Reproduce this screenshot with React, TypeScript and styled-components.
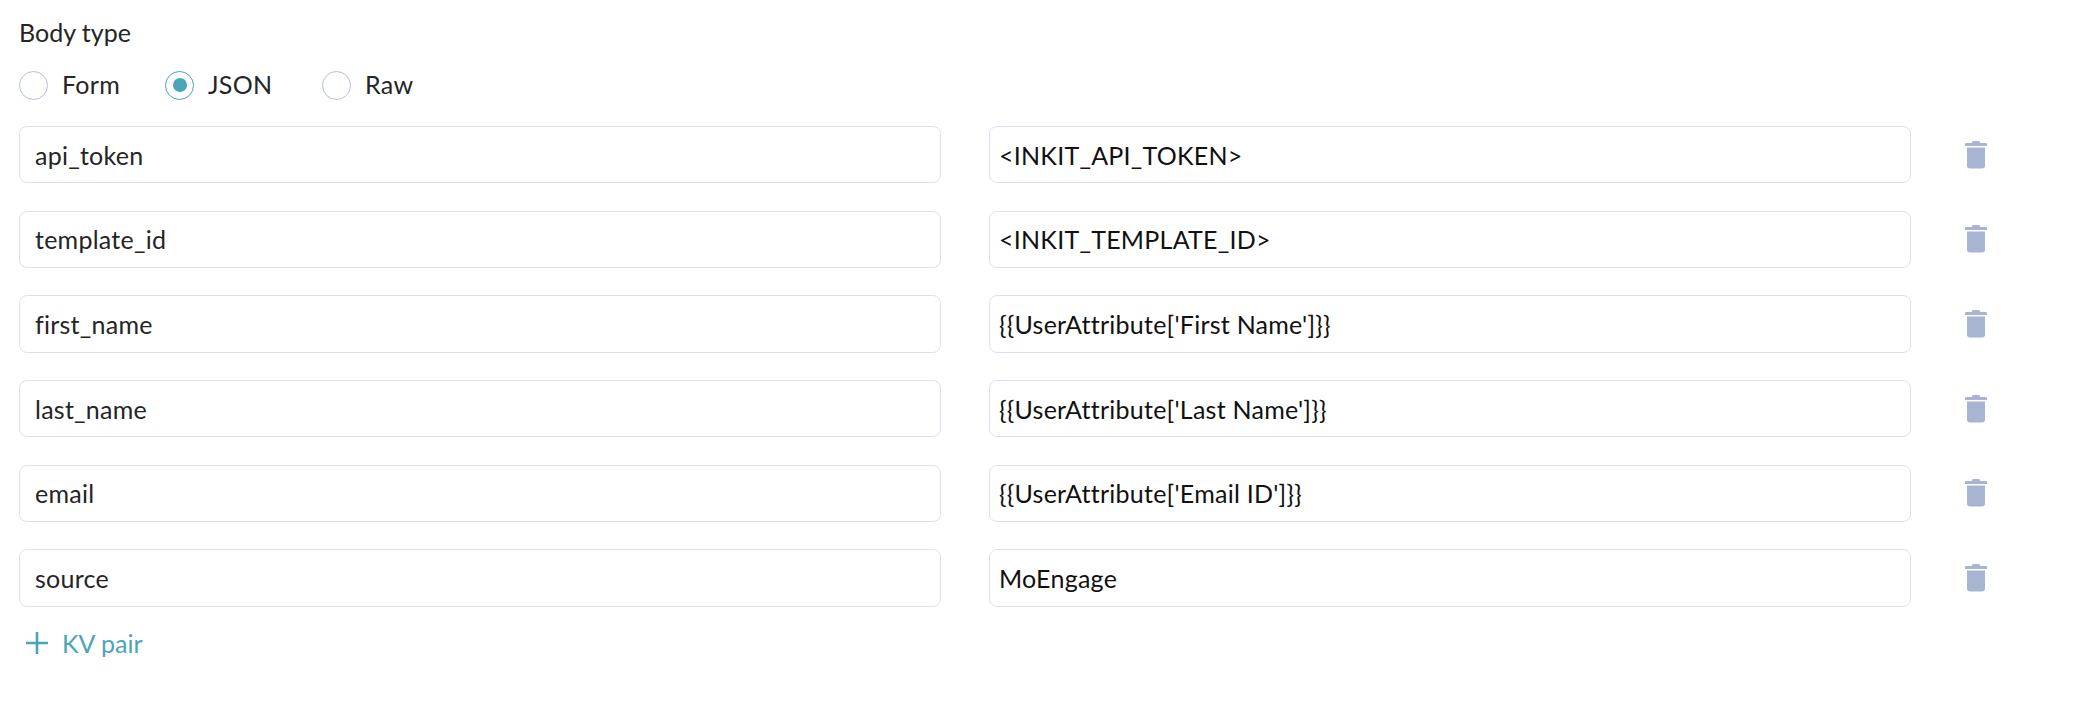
import React from 'react';
import styled, { createGlobalStyle } from 'styled-components';

const TEAL = '#4ba5b9';
const LINE = '#dce1ef';

const GlobalStyle = createGlobalStyle`
  html, body {
    margin: 0;
    padding: 0;
    background: #fff;
  }
  body {
    font-family: Lato, "Liberation Sans", sans-serif;
    color: #252525;
  }
`;

const Page = styled.main`
  width: 2076px;
  height: 712px;
  box-sizing: border-box;
  padding: 15px 0 0 19px;
`;
const Label = styled.div`
  font-size: 25px;
  line-height: 34px;
`;
const RadioRow = styled.div`
  display: flex;
  align-items: center;
  height: 30px;
  margin-top: 21px;
`;
const RadioItem = styled.label`
  display: flex;
  align-items: center;
  gap: 14px;
  width: ${p => p.$width}px;
  font-size: 25px;
  letter-spacing: 0.3px;
`;
const RadioText = styled.span`
  margin-top: -3px;
`;
const RadioMark = styled.span`
  box-sizing: border-box;
  display: flex;
  align-items: center;
  justify-content: center;
  width: 29px;
  height: 29px;
  border-radius: 50%;
  border: 1px solid ${p => (p.$on ? TEAL : '#b3bfdb')};
  &::after {
    content: '';
    display: ${p => (p.$on ? 'block' : 'none')};
    width: 14px;
    height: 14px;
    border-radius: 50%;
    background: ${TEAL};
  }
`;
const Rows = styled.div`
  display: flex;
  flex-direction: column;
  gap: 27.4px;
  margin-top: 26px;
`;
const Row = styled.div`
  display: grid;
  grid-template-columns: 922px 922px 33px;
  column-gap: 48px;
  align-items: center;
`;
const Field = styled.div`
  box-sizing: border-box;
  height: 57.3px;
  display: flex;
  align-items: center;
  padding-left: ${p => p.$pad}px;
  border: 1.5px solid ${LINE};
  border-radius: 8px;
  font-size: 25px;
  letter-spacing: 0.25px;
  color: ${p => (p.$dark ? '#111' : '#252525')};
`;
const TrashButton = styled.button`
  border: 0;
  padding: 0;
  background: none;
  display: flex;
  justify-content: center;
`;
const AddLink = styled.div`
  display: flex;
  align-items: center;
  gap: 14px;
  margin: 20px 0 0 7px;
  color: ${TEAL};
  font-size: 25px;
  line-height: 32px;
`;

const TrashIcon = () => (
  <svg width="22" height="28" viewBox="0 0 22 28" fill="#a7b4d2">
    <path d="M7 1.5C7 .7 7.7 0 8.5 0h5c.8 0 1.5.7 1.5 1.5V2h6a1 1 0 0 1 1 1v2H0V3a1 1 0 0 1 1-1h6z" />
    <path d="M2 6.500h18V24.500a3 3 0 0 1-3 3H5a3 3 0 0 1-3-3z" />
  </svg>
);

const PlusIcon = () => (
  <svg width="22" height="22" viewBox="0 0 22 22" fill="none" stroke={TEAL} strokeWidth="2.6">
    <path d="M11 0v22M0 11h22" />
  </svg>
);

const pairs = [
  ['api_token', '<INKIT_API_TOKEN>'],
  ['template_id', '<INKIT_TEMPLATE_ID>'],
  ['first_name', "{{UserAttribute['First Name']}}"],
  ['last_name', "{{UserAttribute['Last Name']}}"],
  ['email', "{{UserAttribute['Email ID']}}"],
  ['source', 'MoEngage'],
];

export default function App() {
  return (
    <Page>
      <GlobalStyle />
      <Label>Body type</Label>
      <RadioRow>
        <RadioItem $width={146}>
          <RadioMark />
          <RadioText>Form</RadioText>
        </RadioItem>
        <RadioItem $width={157}>
          <RadioMark $on />
          <RadioText>JSON</RadioText>
        </RadioItem>
        <RadioItem $width={120}>
          <RadioMark />
          <RadioText>Raw</RadioText>
        </RadioItem>
      </RadioRow>
      <Rows>
        {pairs.map(([key, value]) => (
          <Row key={key}>
            <Field $pad={15}>{key}</Field>
            <Field $pad={9} $dark>
              {value}
            </Field>
            <TrashButton>
              <TrashIcon />
            </TrashButton>
          </Row>
        ))}
      </Rows>
      <AddLink>
        <PlusIcon />
        KV pair
      </AddLink>
    </Page>
  );
}
